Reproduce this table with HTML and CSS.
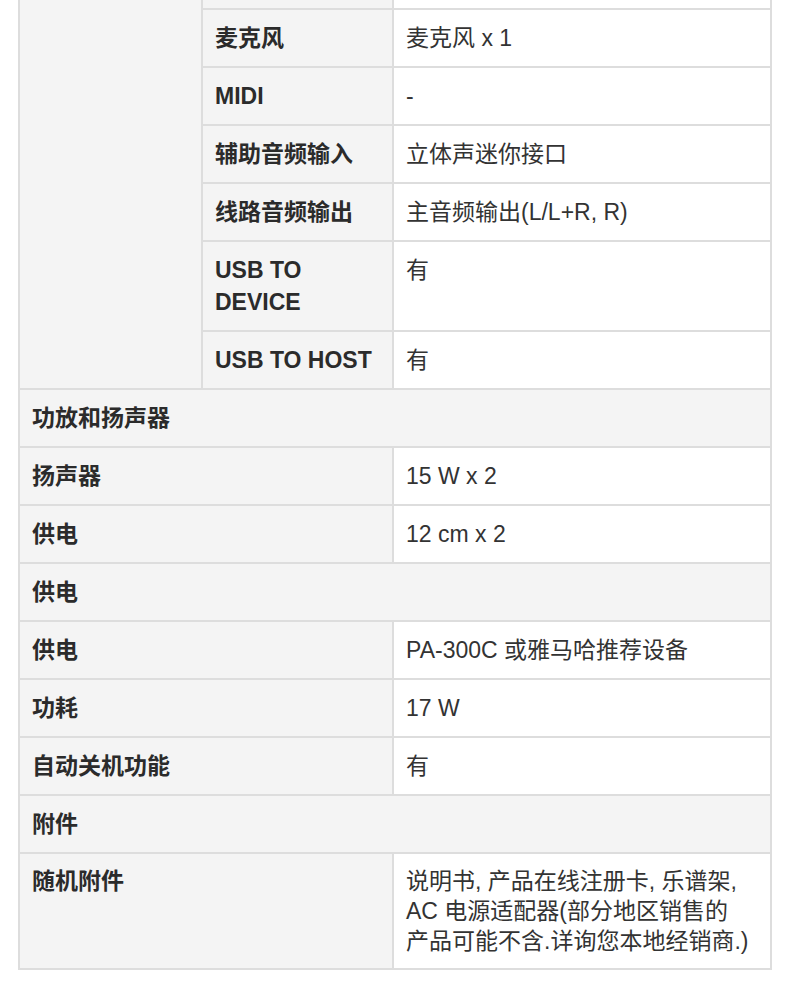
FILE: index.html
```html
<!DOCTYPE html>
<html lang="zh-CN">
<head>
<meta charset="utf-8">
<title>规格</title>
<link rel="stylesheet" href="styles.css">
</head>
<body>
<table class="spec">
  <colgroup>
    <col class="c1">
    <col class="c2">
    <col class="c3">
  </colgroup>
  <tbody>
    <tr class="cut">
      <td class="label" rowspan="7"></td>
      <td class="label"></td>
      <td class="value"></td>
    </tr>
    <tr>
      <td class="label">麦克风</td>
      <td class="value">麦克风 x 1</td>
    </tr>
    <tr>
      <td class="label">MIDI</td>
      <td class="value">-</td>
    </tr>
    <tr>
      <td class="label">辅助音频输入</td>
      <td class="value">立体声迷你接口</td>
    </tr>
    <tr>
      <td class="label">线路音频输出</td>
      <td class="value">主音频输出(L/L+R, R)</td>
    </tr>
    <tr>
      <td class="label">USB TO DEVICE</td>
      <td class="value">有</td>
    </tr>
    <tr>
      <td class="label">USB TO HOST</td>
      <td class="value">有</td>
    </tr>
    <tr>
      <td class="label section" colspan="3">功放和扬声器</td>
    </tr>
    <tr>
      <td class="label" colspan="2">扬声器</td>
      <td class="value">15 W x 2</td>
    </tr>
    <tr>
      <td class="label" colspan="2">供电</td>
      <td class="value">12 cm x 2</td>
    </tr>
    <tr>
      <td class="label section" colspan="3">供电</td>
    </tr>
    <tr>
      <td class="label" colspan="2">供电</td>
      <td class="value">PA-300C 或雅马哈推荐设备</td>
    </tr>
    <tr>
      <td class="label" colspan="2">功耗</td>
      <td class="value">17 W</td>
    </tr>
    <tr>
      <td class="label" colspan="2">自动关机功能</td>
      <td class="value">有</td>
    </tr>
    <tr>
      <td class="label section" colspan="3">附件</td>
    </tr>
    <tr class="tall">
      <td class="label" colspan="2">随机附件</td>
      <td class="value">说明书, 产品在线注册卡, 乐谱架,<br>AC 电源适配器(部分地区销售的<br>产品可能不含.详询您本地经销商.)</td>
    </tr>
  </tbody>
</table>
</body>
</html>
```
FILE: styles.css
```css
html, body {
  margin: 0;
  padding: 0;
  background: #ffffff;
}

body {
  font-family: "Liberation Sans", "Noto Sans CJK SC", sans-serif;
  font-size: 23px;
  color: #333333;
}

.spec {
  border-collapse: collapse;
  table-layout: fixed;
  width: 754px;
  margin: 0 0 0 18px;
  border-top: none;
}

.c1 { width: 183px; }
.c2 { width: 191px; }
.c3 { width: 378px; }

.spec td {
  border: 2px solid #dddddd;
  padding: 12px 12px 12px 12px;
  line-height: 32px;
  vertical-align: top;
  text-align: left;
}

.spec tr.cut td {
  border-top: none;
  padding: 0;
  height: 8px;
  line-height: 0;
}

.label {
  background: #f4f4f4;
  font-weight: bold;
  color: #2b2b2b;
}

.value {
  background: #ffffff;
  font-weight: normal;
  color: #333333;
}

.spec tr.tall td {
  line-height: 30px;
}
```
